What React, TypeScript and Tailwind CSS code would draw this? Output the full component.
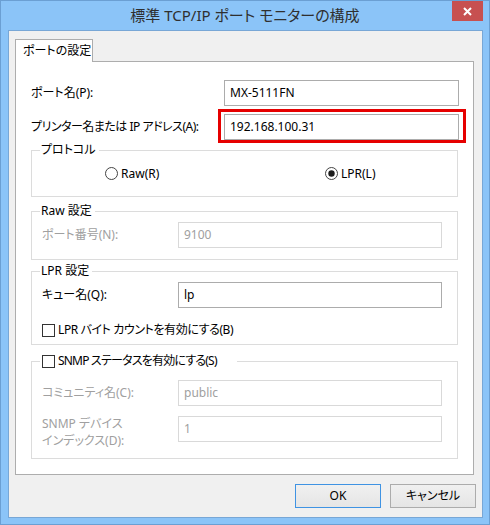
import React from 'react';

const ui = "font-['Noto_Sans','Noto_Sans_CJK_JP',sans-serif] [font-feature-settings:'palt'] text-[12px] leading-[16px]";

function TextBox({ value, disabled = false, width }: { value: string; disabled?: boolean; width: string }) {
  return (
    <div
      className={`${width} h-[26px] shrink-0 flex items-center pl-[5px] bg-white border ${
        disabled ? 'border-[#d9d9d9] text-[#a0a0a0]' : 'border-[#acacac] text-black'
      }`}
    >
      {value}
    </div>
  );
}

function Radio({ checked }: { checked?: boolean }) {
  return (
    <svg width="13" height="13" viewBox="0 0 13 13" className="shrink-0">
      <circle cx="6.5" cy="6.5" r="6" fill="#fff" stroke="#444444" strokeWidth="1" />
      {checked && <circle cx="6.5" cy="6.5" r="3.2" fill="#1c1c1c" />}
    </svg>
  );
}

function CheckBox() {
  return <div className="w-[13px] h-[13px] shrink-0 bg-white border border-[#333333]" />;
}

function Group({ legend, height, className = '', children }: { legend: React.ReactNode; height: string; className?: string; children?: React.ReactNode }) {
  return (
    <div className={`relative ml-[15px] w-[427px] ${height} border border-[#dcdcdc] ${className}`}>
      <div className="absolute left-[8px] top-[-1px] -translate-y-1/2 bg-white pl-[1px] pr-[3px]">{legend}</div>
      {children}
    </div>
  );
}

export default function App() {
  return (
    <div className={`w-[490px] h-[525px] bg-[#8bc4f8] border border-[#6b9fd3] flex flex-col ${ui}`}>
      {/* title bar */}
      <div className="relative h-[29px] shrink-0 flex items-center justify-center">
        <span className="text-[15px] text-[#2f2f2f] pb-[1px]">標準 TCP/IP ポート モニターの構成</span>
        <div className="absolute top-0 right-[6px] w-[31px] h-[20px] bg-[#c75050] flex items-center justify-center">
          <svg width="9" height="9" viewBox="0 0 9 9">
            <path d="M1 1 L8 8 M8 1 L1 8" stroke="#fff" strokeWidth="2" />
          </svg>
        </div>
      </div>

      {/* client area */}
      <div className="ml-[7px] w-[475px] h-[488px] shrink-0 bg-[#f0f0f0] border border-[#78a7d6] flex flex-col pt-[8px] pl-[6px]">
        <div className="relative z-10 -mb-px w-[78px] h-[23px] bg-white border border-b-0 border-[#adadad] flex items-center pl-[7px] text-black">
          ポートの設定
        </div>
        <div className="w-[459px] h-[414px] bg-white border border-[#adadad] flex flex-col pt-[18px] text-black">
          <div className="flex items-center pl-[15px]">
            <div className="w-[193px]">ポート名(P):</div>
            <TextBox value="MX-5111FN" width="w-[235px]" />
          </div>
          <div className="flex items-center pl-[15px] mt-[8px]">
            <div className="w-[193px] tracking-[-0.5px]">プリンター名または IP アドレス(A):</div>
            <div className="relative">
              <TextBox value="192.168.100.31" width="w-[235px]" />
              <div className="absolute left-[-6px] top-[-5px] w-[248px] h-[34px] border-[3px] border-[#e60000]" />
            </div>
          </div>

          <Group legend="プロトコル" height="h-[47px]" className="mt-[10px] flex items-center">
            <div className="w-[220px] pl-[73px] flex items-center gap-[3px]">
              <Radio />
              <span>Raw(R)</span>
            </div>
            <div className="pl-[73px] flex items-center gap-[3px]">
              <Radio checked />
              <span>LPR(L)</span>
            </div>
          </Group>

          <Group legend="Raw 設定" height="h-[49px]" className="mt-[14px] pt-[10px] pl-[10px]">
            <div className="flex items-center">
              <div className="w-[136px] text-[#a0a0a0]">ポート番号(N):</div>
              <TextBox value="9100" disabled width="w-[264px]" />
            </div>
          </Group>

          <Group legend="LPR 設定" height="h-[74px]" className="mt-[11px] pt-[10px] pl-[10px]">
            <div className="flex items-center">
              <div className="w-[136px]">キュー名(Q):</div>
              <TextBox value="lp" width="w-[264px]" />
            </div>
            <div className="mt-[14px] h-[16px] flex items-center gap-[3px]">
              <CheckBox />
              <span className="tracking-[-0.4px]">LPR バイト カウントを有効にする(B)</span>
            </div>
          </Group>

          <Group
            legend={
              <div className="flex items-center gap-[3px] pl-[1px] pr-[17px]">
                <CheckBox />
                <span className="tracking-[-0.8px]">SNMP ステータスを有効にする(S)</span>
              </div>
            }
            height="h-[98px]"
            className="mt-[16px] pt-[18px] pl-[10px]"
          >
            <div className="flex items-center">
              <div className="w-[136px] text-[#a0a0a0]">コミュニティ名(C):</div>
              <TextBox value="public" disabled width="w-[264px]" />
            </div>
            <div className="flex items-start mt-[10px]">
              <div className="w-[136px] text-[#a0a0a0] leading-[17px] mt-[-1px]">
                <div>SNMP デバイス</div>
                <div>インデックス(D):</div>
              </div>
              <TextBox value="1" disabled width="w-[264px]" />
            </div>
          </Group>
        </div>

        <div className="flex justify-end gap-[9px] mt-[9px] pr-[6px]">
          <div className="w-[86px] h-[24px] flex items-center justify-center border border-[#3f93e3] bg-gradient-to-b from-[#f0f0f0] to-[#e5e5e5] text-black">
            OK
          </div>
          <div className="w-[86px] h-[24px] flex items-center justify-center border border-[#acacac] bg-gradient-to-b from-[#f0f0f0] to-[#e5e5e5] text-black">
            キャンセル
          </div>
        </div>
      </div>
    </div>
  );
}
